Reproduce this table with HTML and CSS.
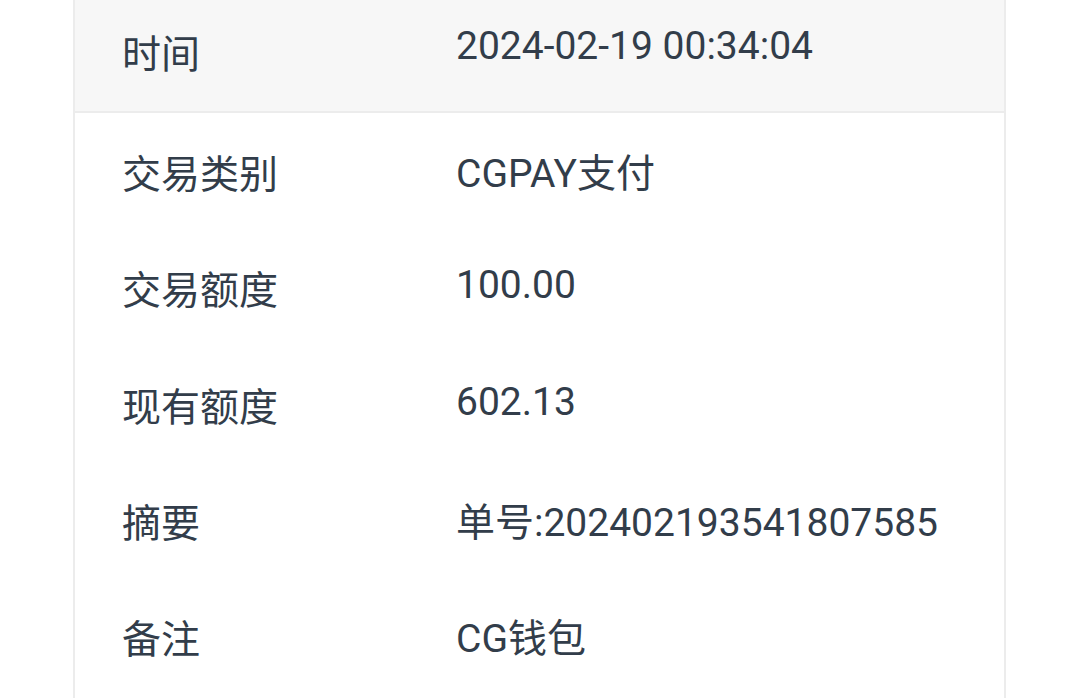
FILE: index.html
```html
<!DOCTYPE html>
<html lang="zh-CN">
<head>
<meta charset="utf-8">
<title>交易详情</title>
<link rel="stylesheet" href="styles.css">
</head>
<body>
<div class="card">
  <div class="row row-head">
    <div class="label">时间</div>
    <div class="value num num-head">2024-02-19 00:34:04</div>
  </div>
  <div class="row">
    <div class="label">交易类别</div>
    <div class="value">CGPAY支付</div>
  </div>
  <div class="row">
    <div class="label">交易额度</div>
    <div class="value num">100.00</div>
  </div>
  <div class="row">
    <div class="label">现有额度</div>
    <div class="value num">602.13</div>
  </div>
  <div class="row">
    <div class="label">摘要</div>
    <div class="value">单号:202402193541807585</div>
  </div>
  <div class="row">
    <div class="label">备注</div>
    <div class="value">CG钱包</div>
  </div>
</div>
</body>
</html>
```
FILE: styles.css
```css
html, body {
  margin: 0;
  padding: 0;
  background: #ffffff;
  overflow: hidden;
}

body {
  width: 1080px;
  height: 698px;
  font-family: Roboto, "Noto Sans CJK SC", sans-serif;
  font-size: 39px;
  color: #323d4a;
}

.card {
  margin-left: 73px;
  width: 929px;
  border-left: 2px solid #ececec;
  border-right: 2px solid #ececec;
  min-height: 760px;
}

.row {
  display: grid;
  grid-template-columns: 334px 1fr;
  align-items: start;
  height: 116.3px;
  box-sizing: border-box;
  padding-left: 47px;
  padding-top: 36px;
}

.row-head {
  height: 113px;
  padding-top: 29px;
  background: #f7f7f7;
  border-bottom: 2px solid #ececec;
}

.label,
.value {
  line-height: 44px;
  white-space: nowrap;
}

.label {
  font-family: "Noto Sans CJK SC", sans-serif;
}

.value {
  margin-top: 3px;
}

.value.num {
  margin-top: -2px;
}

.value.num-head {
  margin-top: -5px;
}
```
